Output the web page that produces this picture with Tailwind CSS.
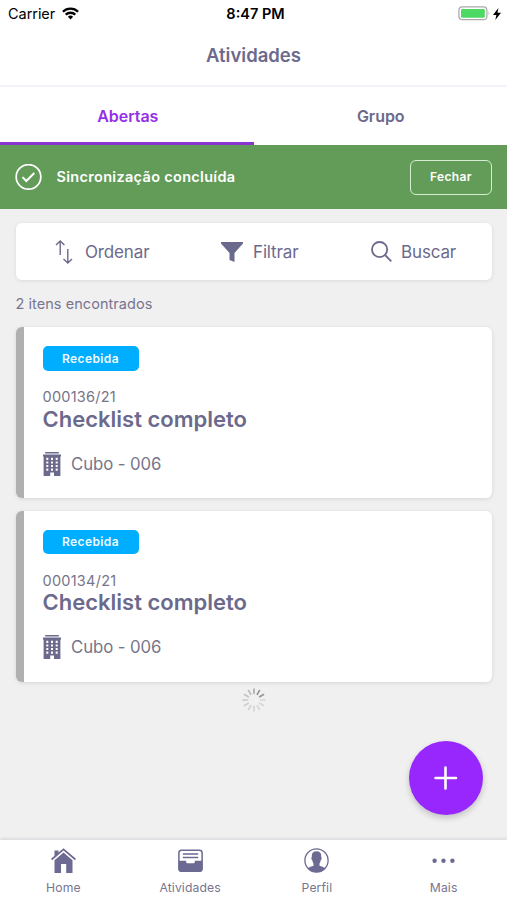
<!DOCTYPE html>
<html lang="pt-BR">
<head>
<meta charset="utf-8">
<title>Atividades</title>
<script src="https://cdn.jsdelivr.net/npm/@tailwindcss/browser@4"></script>
</head>
<body class="w-[507px] h-[900px] overflow-hidden bg-[#f0f0f0] text-[#6c6a8c] font-['Inter',sans-serif]">
<svg class="hidden">
  <symbol id="building" viewBox="0 0 18 24">
    <path fill="currentColor" fill-rule="evenodd" d="M2.200 0h13.600v1.500H2.200zM0 2.400h18v2h-.6V24H11v-3.500H7.200V24H.6V4.400H0zM3.300 5.800v2.100h2V5.800zm4.700 0v2.100h2V5.800zm4.700 0v2.100h2V5.800zM3.300 9.400v2.100h2V9.400zm4.700 0v2.100h2V9.400zm4.700 0v2.100h2V9.400zM3.300 13v2.100h2V13zM8 13v2.100h2V13zm4.700 0v2.100h2V13zM3.300 16.600v2.100h2v-2.100zm4.700 0v2.100h2v-2.100zm4.700 0v2.100h2v-2.100z"/>
  </symbol>
</svg>
<div class="flex flex-col h-full">
  <header class="bg-white">
    <div class="h-[28px] grid grid-cols-3 items-center text-[14.5px] leading-none text-black">
      <div class="flex items-center pl-[8px] gap-[7px]">
        <span class="tracking-[-0.05px]">Carrier</span>
        <svg class="w-[17px] h-[13px] mb-[2px]" viewBox="0 0 17 13" fill="none" stroke="#000" stroke-width="2.300"><path d="M.9 4.700a10.900 10.900 0 0 1 15.200 0M3.700 7.700a6.900 6.900 0 0 1 9.600 0"/><path d="M8.500 12.500 5.900 9.800a3.800 3.800 0 0 1 5.200 0z" fill="#000" stroke="none"/></svg>
      </div>
      <span class="text-center font-semibold pl-[4px] whitespace-nowrap">8:47 PM</span>
      <div class="flex items-center justify-end pr-[6px] gap-[2px] pb-[1px]">
        <svg class="w-[33px] h-[15px]" viewBox="0 0 33 15"><rect x=".9" y=".9" width="28" height="12.800" rx="3.500" fill="#fff" stroke="#a9a9a9" stroke-width="1.200"/><rect x="3" y="3" width="23.800" height="8.700" rx="1.300" fill="#4cd964"/><path d="M30.500 5.200q1.400 2.100 0 4.200z" fill="#a9a9a9"/></svg>
        <svg class="w-[8px] h-[12px]" viewBox="0 0 8 12"><path d="M5.400 0 0 7h3.400L2.300 12 8 4.800H4.500z" fill="#000"/></svg>
      </div>
    </div>
    <div class="h-[57px] flex items-center justify-center pb-[2px]"><h1 class="text-[18.5px] font-semibold tracking-[0px]">Atividades</h1></div>
    <div class="h-[2px] bg-[#f3f2fd]"></div>
    <nav class="h-[58px] grid grid-cols-2 text-[16px] font-semibold tracking-[-0.05px] text-center">
      <div class="flex items-center justify-center text-[#9430e8] border-b-[3px] border-[#8a35d0] pl-[2px] pt-[2px]">Abertas</div>
      <div class="flex items-center justify-center pl-[1px] pb-[1px]">Grupo</div>
    </nav>
  </header>
  <div class="h-[64px] bg-[#629c58] flex items-center px-[15px] text-white shrink-0">
    <svg class="w-[27px] h-[27px]" viewBox="0 0 27 27" fill="none" stroke="#fff" stroke-width="1.700"><circle cx="13.500" cy="12.900" r="12.300"/><path d="m7.500 13.100 3.800 3.900 8-8" stroke-width="2"/></svg>
    <span class="ml-[14.500px] text-[14.500px] font-semibold tracking-[0.310px]">Sincronização concluída</span>
    <button class="ml-auto w-[82px] h-[35px] rounded-[6px] border-[1.500px] border-[#d5edd0] text-[12px] font-semibold tracking-[0.35px]">Fechar</button>
  </div>
  <main class="flex-1 pl-[15.500px] pr-[15px] pt-[14px] flex flex-col relative">
    <div class="h-[57px] shrink-0 bg-white rounded-[6px] shadow-[0_1px_4px_rgba(0,0,0,0.09)] flex items-center text-[17px] tracking-[-0.15px]">
      <div class="flex items-center ml-[39.500px] w-[166px]">
        <svg class="w-[18px] h-[24px]" viewBox="0 0 18 24" fill="none" stroke="currentColor" stroke-width="1.400"><path d="M5.200 15V1M1 5l4.200-4 4.200 4M12.800 9v14M8.500 19l4.300 4 4.200-4"/></svg>
        <span class="ml-[12px] pt-[2px]">Ordenar</span>
      </div>
      <div class="flex items-center w-[149.500px]">
        <svg class="w-[22px] h-[20px]" viewBox="0 0 22 20"><path fill="currentColor" d="M0 0h22v1.500L13.500 11v9L8.500 18v-7L0 1.500z"/></svg>
        <span class="ml-[10px] pt-[2px]">Filtrar</span>
      </div>
      <div class="flex items-center">
        <svg class="w-[21px] h-[21px]" viewBox="0 0 21 21" fill="none" stroke="currentColor" stroke-width="1.800"><circle cx="8.600" cy="8.600" r="7.600"/><path d="m14 14 6.300 6.300"/></svg>
        <span class="ml-[9.500px] pt-[2px]">Buscar</span>
      </div>
    </div>
    <p class="mt-[13px] text-[14.500px] leading-[22px] tracking-[0.05px] text-[#77758f]">2 itens encontrados</p>
    <article class="mt-[12px] h-[171px] shrink-0 bg-white rounded-[6px] border-l-[8px] border-[#b0b0b0] shadow-[0_1px_4px_rgba(0,0,0,0.11)] pl-[19px] pt-[19px]">
      <div class="w-[96px] h-[25px] rounded-[5px] bg-[#00aeff] text-[#eefaff] text-[12px] font-semibold tracking-[0.4px] flex items-center justify-center">Recebida</div>
      <p class="mt-[16px] text-[14.500px] leading-[20px] tracking-[0.25px] text-[#77758a]">000136/21</p>
      <h2 class="text-[22px] leading-[24px] font-semibold">Checklist completo</h2>
      <div class="mt-[20px] flex items-center"><svg class="w-[18px] h-[24px]"><use href="#building"/></svg><span class="ml-[10.500px] pt-px text-[16.800px] leading-[24px] tracking-[-0.1px] text-[#77758a]">Cubo - 006</span></div>
    </article>
    <article class="mt-[13px] h-[171px] shrink-0 bg-white rounded-[6px] border-l-[8px] border-[#b0b0b0] shadow-[0_1px_4px_rgba(0,0,0,0.11)] pl-[19px] pt-[19px]">
      <div class="w-[96px] h-[24px] rounded-[5px] bg-[#00aeff] text-[#eefaff] text-[12px] font-semibold tracking-[0.4px] flex items-center justify-center">Recebida</div>
      <p class="mt-[17px] text-[14.500px] leading-[20px] tracking-[0.25px] text-[#77758a]">000134/21</p>
      <h2 class="text-[22px] leading-[22px] font-semibold">Checklist completo</h2>
      <div class="mt-[22px] flex items-center"><svg class="w-[18px] h-[24px]"><use href="#building"/></svg><span class="ml-[10.500px] text-[16.800px] leading-[24px] tracking-[-0.1px] text-[#77758a]">Cubo - 006</span></div>
    </article>
    <svg class="mt-[6px] w-[24px] h-[24px] self-center shrink-0" viewBox="-12 -12 24 24" stroke="#8c8c8c" stroke-width="1.600" stroke-linecap="round">
      <path d="M0-6.500V-11" opacity=".7"/><path d="M0-6.500V-11" transform="rotate(30)" opacity=".95"/><path d="M0-6.500V-11" transform="rotate(60)" opacity=".9"/><path d="M0-6.500V-11" transform="rotate(90)" opacity=".25"/><path d="M0-6.500V-11" transform="rotate(120)" opacity=".25"/><path d="M0-6.500V-11" transform="rotate(150)" opacity=".27"/><path d="M0-6.500V-11" transform="rotate(180)" opacity=".28"/><path d="M0-6.500V-11" transform="rotate(210)" opacity=".3"/><path d="M0-6.500V-11" transform="rotate(240)" opacity=".33"/><path d="M0-6.500V-11" transform="rotate(270)" opacity=".38"/><path d="M0-6.500V-11" transform="rotate(300)" opacity=".45"/><path d="M0-6.500V-11" transform="rotate(330)" opacity=".55"/>
    </svg>
    <button class="absolute right-[24px] bottom-[25px] w-[74px] h-[74px] rounded-full bg-[#9727fd] shadow-[0_3px_6px_rgba(0,0,0,0.2)] flex items-center justify-center" aria-label="Adicionar">
      <svg class="w-[24px] h-[24px]" viewBox="0 0 24 24" stroke="#fff" stroke-width="2.600" stroke-linecap="round"><path d="M11.500 1.500v21M1.500 12h20.500"/></svg>
    </button>
  </main>
  <footer class="h-[60px] shrink-0 bg-white shadow-[0_-1px_3px_rgba(70,70,100,0.16)] grid grid-cols-4 text-[12.200px] leading-[16px] tracking-[0.1px] text-[#77758f]">
    <div class="flex flex-col items-center pt-[8px] gap-[7px]">
      <svg class="w-[25px] h-[25px] text-[#6c6a92]" viewBox="0 0 25 25"><path fill="currentColor" d="M12.500 4.500 21.500 12.300V25h-6.300v-9H10v9H3.500V12.300z"/><path fill="none" stroke="#fff" stroke-width="1" d="M1.500 13 12.500 3.400 23.500 13"/><path fill="currentColor" d="M3.500 2.500h4v2.900l-4 3.500z"/><path fill="none" stroke="currentColor" stroke-width="1.700" d="M.6 11.500 12.500 1.300l11.900 10.200"/></svg>
      <span>Home</span>
    </div>
    <div class="flex flex-col items-center pt-[9px] gap-[7px]">
      <svg class="w-[25px] h-[24px] text-[#6c6a92]" viewBox="0 0 25 24" fill="none" stroke="currentColor"><rect x=".9" y="1.200" width="23.200" height="21" rx="2.600" stroke-width="1.500"/><path stroke-width="1.400" d="M4.800 5h15.400M4.800 8.500h15.400"/><path fill="currentColor" stroke="none" d="M.5 11.800h7.700v1.100q0 1.300 1.300 1.300h6q1.300 0 1.300-1.300v-1.100h7.700V20q0 3-3 3h-18q-3 0-3-3z"/></svg>
      <span>Atividades</span>
    </div>
    <div class="flex flex-col items-center pt-[8px] gap-[7px]">
      <svg class="w-[25px] h-[25px] text-[#6c6a92]" viewBox="0 0 25 25"><circle cx="12.500" cy="12.500" r="11.600" fill="none" stroke="currentColor" stroke-width="1.300"/><path fill="currentColor" d="M12.500 3.300c3.500 0 5 2 4.700 5.800.8.500.4 2.700-.5 3.100-.3 1.800-.8 2.600-1.200 3.200v2.300c1.700 1 4.300 1.100 5.800 2.600a12 12 0 0 1-17.600 0c1.500-1.500 4.100-1.600 5.800-2.600v-2.300c-.4-.6-.9-1.400-1.200-3.200-.9-.4-1.300-2.600-.5-3.100-.3-3.800 1.200-5.800 4.700-5.800z"/></svg>
      <span>Perfil</span>
    </div>
    <div class="flex flex-col items-center pt-[8px] gap-[7px]">
      <svg class="w-[25px] h-[25px] text-[#6c6a92]" viewBox="0 0 25 25" fill="currentColor"><circle cx="3.600" cy="12.700" r="2.200"/><circle cx="12.500" cy="12.700" r="2.200"/><circle cx="21.400" cy="12.700" r="2.200"/></svg>
      <span>Mais</span>
    </div>
  </footer>
</div>
</body>
</html>
